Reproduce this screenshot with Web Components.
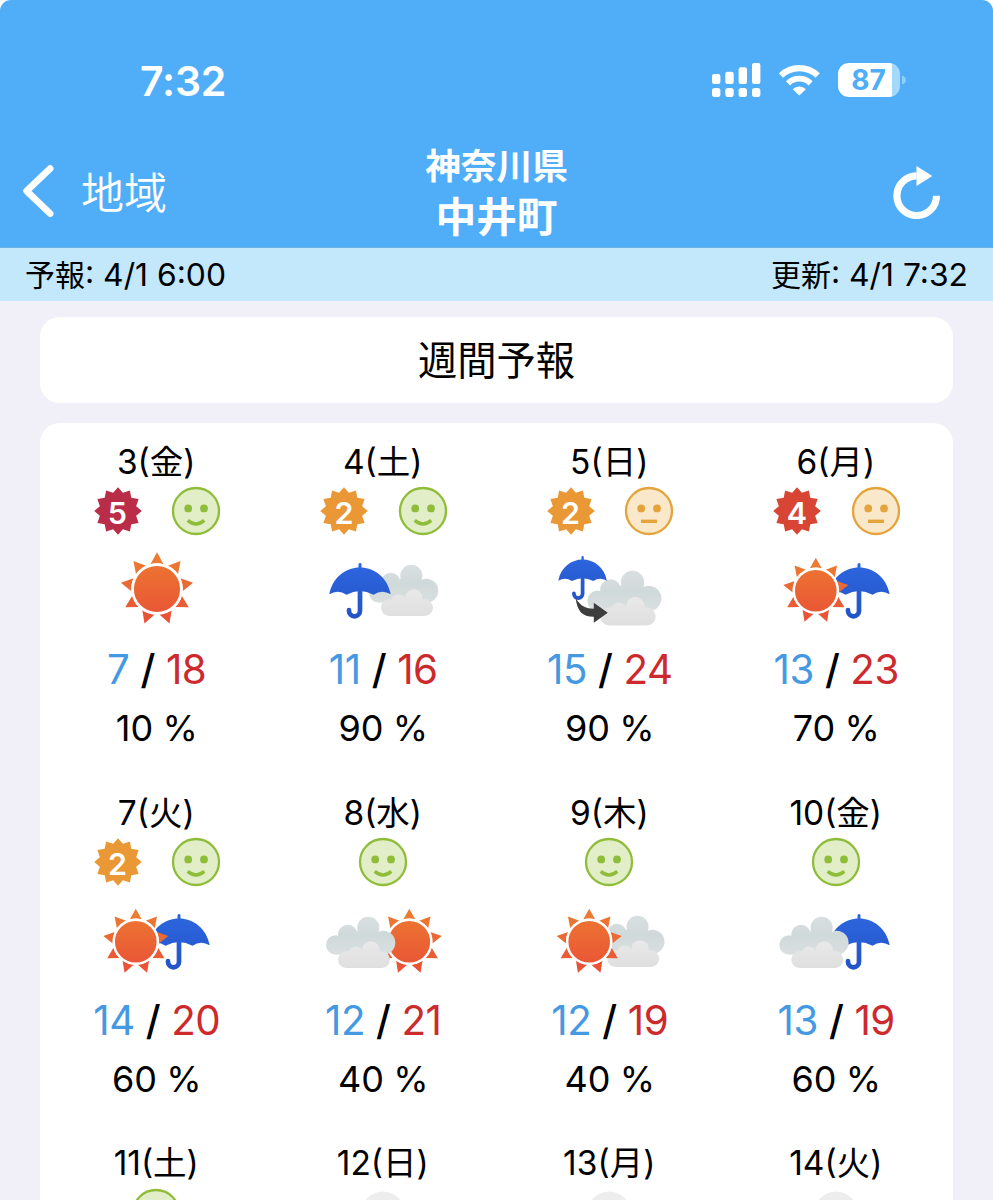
<!DOCTYPE html>
<html lang="ja">
<head>
<meta charset="utf-8">
<title>週間予報</title>
<style>
  body {
    margin: 0;
    background: #fff;
    color: #000;
    font-family: Inter, "Noto Sans CJK JP", sans-serif;
  }

  .kanji {
    font-size: 30px;
  }
</style>
</head>
<body>
<weather-app>
  <status-bar slot="header" time="7:32" battery="87"></status-bar>
  <nav-bar slot="header" back="地域">
    <span slot="prefecture">神奈川県</span>
    <span slot="town">中井町</span>
  </nav-bar>
  <update-strip>
    <span slot="forecast"><span class="kanji">予報</span>: 4/1 6:00</span>
    <span slot="updated"><span class="kanji">更新</span>: 4/1 7:32</span>
  </update-strip>
  <panel-card class="title">週間予報</panel-card>
  <panel-card class="days"><week-forecast></week-forecast></panel-card>
</weather-app>

<script>
const DAYS = [
  { date: "3(金)", uv: 5, mood: "good", sky: "sun", low: 7, high: 18, rain: 10 },
  { date: "4(土)", uv: 2, mood: "good", sky: "umbrella-cloud", low: 11, high: 16, rain: 90 },
  { date: "5(日)", uv: 2, mood: "fair", sky: "umbrella-to-cloud", low: 15, high: 24, rain: 90 },
  { date: "6(月)", uv: 4, mood: "fair", sky: "sun-umbrella", low: 13, high: 23, rain: 70 },
  { date: "7(火)", uv: 2, mood: "good", sky: "sun-umbrella", low: 14, high: 20, rain: 60 },
  { date: "8(水)", mood: "good", sky: "cloud-sun", low: 12, high: 21, rain: 40 },
  { date: "9(木)", mood: "good", sky: "sun-cloud", low: 12, high: 19, rain: 40 },
  { date: "10(金)", mood: "good", sky: "cloud-umbrella", low: 13, high: 19, rain: 60 },
  { date: "11(土)", mood: "good" },
  { date: "12(日)", mood: "none" },
  { date: "13(月)", mood: "none" },
  { date: "14(火)", mood: "none" },
];

class WeatherApp extends HTMLElement {
  constructor() {
    super();
    this.attachShadow({ mode: "open" });
    this.shadowRoot.innerHTML = `
      <style>
        :host {
          display: flex;
          flex-direction: column;
          width: 993px;
          height: 1200px;
          overflow: hidden;
          border-radius: 11px 11px 0 0;
          background: #f1f0f8;
        }

        header {
          box-sizing: border-box;
          flex: none;
          height: 248px;
          background: #50aef8;
          border-bottom: 1px solid #68b2e4;
        }
      </style>
      <header><slot name="header"></slot></header>
      <slot></slot>
    `;
  }
}

class StatusBar extends HTMLElement {
  constructor() {
    super();
    this.attachShadow({ mode: "open" });
    this.shadowRoot.innerHTML = `
      <style>
        :host {
          display: flex;
          align-items: center;
          justify-content: space-between;
          height: 80px;
          padding: 40px 87px 0 140px;
          color: #fff;
        }

        .time {
          padding-top: 1px;
          font-size: 41px;
          font-weight: 600;
          line-height: 50px;
          letter-spacing: -0.2px;
        }

        .icons {
          display: flex;
          align-items: center;
          gap: 17.5px;
        }

        svg {
          display: block;
        }

        .battery {
          display: flex;
          align-items: center;
          gap: 2px;
        }

        .level {
          box-sizing: border-box;
          width: 62px;
          height: 34px;
          padding-right: 1px;
          border-radius: 11px;
          background: linear-gradient(90deg, #fff 54px, #a3dafc 54px);
          color: #50aef8;
          font-size: 28px;
          font-weight: 700;
          line-height: 35px;
          text-align: center;
        }
      </style>
      <span class="time">${this.getAttribute("time")}</span>
      <div class="icons">
        <svg width="49" height="34" fill="#fff">
          <rect x="0" y="11" width="8.4" height="10" rx="2.2"/>
          <rect x="13.3" y="8.7" width="8.4" height="12.3" rx="2.2"/>
          <rect x="26.6" y="4.3" width="8.4" height="16.7" rx="2.2"/>
          <rect x="40" y="0" width="8.4" height="21" rx="2.2"/>
          <rect x="0" y="25" width="8.4" height="9" rx="2.8"/>
          <rect x="13.3" y="25" width="8.4" height="9" rx="2.8"/>
          <rect x="26.6" y="25" width="8.4" height="9" rx="2.8"/>
          <rect x="40" y="25" width="8.4" height="9" rx="2.8"/>
        </svg>
        <svg width="42" height="34" fill="none" stroke="#fff">
          <path d="M1.9 12.6A26.6 26.6 0 0 1 38.7 12.6" stroke-width="6.2"/>
          <path d="M9 20.3A16.2 16.2 0 0 1 31.6 20.3" stroke-width="5.8"/>
          <path d="M20.3 32.6l-6.6-6.4a9.3 9.3 0 0 1 13.2 0z" fill="#fff" stroke="none"/>
        </svg>
        <div class="battery">
          <div class="level">${this.getAttribute("battery")}</div>
          <svg width="4" height="12"><path d="M0 1.5Q4 3 4 6T0 10.5z" fill="#8fcffb"/></svg>
        </div>
      </div>
    `;
  }
}

class NavBar extends HTMLElement {
  constructor() {
    super();
    this.attachShadow({ mode: "open" });
    this.shadowRoot.innerHTML = `
      <style>
        :host {
          display: grid;
          grid-template-columns: 1fr auto 1fr;
          align-items: center;
          height: 106px;
          padding: 18px 52px 0 20px;
          color: #fff;
        }

        .back {
          display: flex;
          align-items: center;
          gap: 23px;
          font-size: 43px;
          font-weight: 350;
          line-height: 56px;
        }

        .back span {
          padding-top: 4px;
        }

        .place {
          display: flex;
          flex-direction: column;
          align-items: center;
          margin-left: 32px;
          padding-top: 4px;
          font-weight: 700;
        }

        .prefecture {
          font-size: 35.7px;
          line-height: 49px;
        }

        .town {
          font-size: 40.7px;
          line-height: 53px;
        }

        svg {
          display: block;
        }

        .reload {
          justify-self: end;
        }
      </style>
      <div class="back">
        <svg width="38" height="56" fill="none" stroke="#fff" stroke-width="6.6" stroke-linecap="round" stroke-linejoin="round">
          <path d="M30.2 5.5L6.6 28l23.6 22.7"/>
        </svg>
        <span>${this.getAttribute("back")}</span>
      </div>
      <div class="place">
        <div class="prefecture"><slot name="prefecture"></slot></div>
        <div class="town"><slot name="town"></slot></div>
      </div>
      <svg class="reload" width="48" height="56">
        <path d="M43.5 32.7A19.8 19.8 0 1 1 23.7 12.9" fill="none" stroke="#fff" stroke-width="7.2"/>
        <path d="M23.5 3L39.3 13 23.5 23z" fill="#fff"/>
      </svg>
    `;
  }
}

class UpdateStrip extends HTMLElement {
  constructor() {
    super();
    this.attachShadow({ mode: "open" });
    this.shadowRoot.innerHTML = `
      <style>
        :host {
          display: flex;
          flex: none;
          justify-content: space-between;
          height: 53px;
          padding: 0 25px;
          background: #c3e7fb;
          font-size: 31.8px;
          line-height: 53px;
        }
      </style>
      <slot name="forecast"></slot>
      <slot name="updated"></slot>
    `;
  }
}

class PanelCard extends HTMLElement {
  constructor() {
    super();
    this.attachShadow({ mode: "open" });
    this.shadowRoot.innerHTML = `
      <style>
        :host {
          display: block;
          flex: none;
          width: 913px;
          margin: 16px 0 0 40px;
          border-radius: 20px;
          background: #fff;
        }

        :host(.title) {
          height: 86px;
          font-size: 39.3px;
          line-height: 87px;
          text-align: center;
        }

        :host(.days) {
          margin-top: 20px;
        }
      </style>
      <slot></slot>
    `;
  }
}

class UvBadge extends HTMLElement {
  constructor() {
    super();
    this.attachShadow({ mode: "open" });
    const level = this.getAttribute("level");
    const colors = { 2: "#ea9836", 4: "#d94534", 5: "#b92d49" };
    // star with alternating outer and inner radius
    const spikes = 12;
    const points = [];
    for (let i = 0; i < spikes * 2; i++) {
      const r = i % 2 ? 18.8 : 23.8;
      const a = (i * Math.PI) / spikes;
      points.push(`${(24 + r * Math.sin(a)).toFixed(2)},${(24 - r * Math.cos(a)).toFixed(2)}`);
    }
    this.shadowRoot.innerHTML = `
      <style>
        :host {
          display: grid;
          width: 48px;
          height: 48px;
        }

        svg, span {
          grid-area: 1 / 1;
        }

        span {
          padding: 2px 1px 0 0;
          color: #fff;
          font-size: 30.5px;
          font-weight: 600;
          line-height: 48px;
          text-align: center;
        }
      </style>
      <svg width="48" height="48"><polygon points="${points.join(" ")}" fill="${colors[level]}"/></svg>
      <span>${level}</span>
    `;
  }
}

class MoodFace extends HTMLElement {
  constructor() {
    super();
    this.attachShadow({ mode: "open" });
    const mood = this.getAttribute("mood");
    const line = mood === "good" ? "#8fbd3a" : "#e5a33b";
    const fill = mood === "good" ? "#e1eec7" : "#fae8cb";
    const mouth = mood === "good" ? "M15.7 33.4Q24 40.4 32.3 33.4" : "M16 34.3h16";
    const face = `
      <circle cx="24" cy="24" r="23" fill="${fill}" stroke="${line}" stroke-width="2.3"/>
      <circle cx="16.2" cy="21.4" r="3.9" fill="${line}"/>
      <circle cx="32" cy="21.4" r="3.9" fill="${line}"/>
      <path d="${mouth}" fill="none" stroke="${line}" stroke-width="3.4"/>`;
    this.shadowRoot.innerHTML = `
      <style>
        :host {
          display: block;
          width: 48px;
          height: 48px;
        }

        svg {
          display: block;
          overflow: visible;
        }
      </style>
      <svg width="48" height="48">
        ${mood === "none" ? '<circle cx="24" cy="24" r="21.5" fill="#ededed"/>' : face}
      </svg>
    `;
  }
}

class SkyIcon extends HTMLElement {
  constructor() {
    super();
    this.attachShadow({ mode: "open" });
    const { sun, cloud, umbrella, arrow } = this;
    const skies = {
      "sun": sun(71, 44, 1.11),
      "umbrella-cloud": cloud(56, 19.7, 1) + umbrella(47, 18, 1),
      "umbrella-to-cloud": cloud(48.4, 25.7, 1.067) + umbrella(43.6, 11, 0.79) + arrow(),
      "sun-umbrella": umbrella(93, 18, 1) + sun(49.8, 45.7, 1),
      "cloud-sun": sun(96.3, 45.7, 1) + cloud(13, 20.7, 1),
      "sun-cloud": cloud(56.2, 19.7, 1) + sun(50.2, 45.7, 1),
      "cloud-umbrella": umbrella(93, 18, 1) + cloud(13.3, 20.7, 1),
    };
    this.shadowRoot.innerHTML = `
      <style>
        :host {
          display: block;
          width: 140px;
          height: 90px;
        }

        svg {
          display: block;
        }
      </style>
      <svg width="140" height="90">
        <defs>
          <linearGradient id="sun" gradientUnits="userSpaceOnUse" x1="0" y1="-33" x2="0" y2="33">
            <stop offset="0" stop-color="#ed7a30"/>
            <stop offset="1" stop-color="#e94f37"/>
          </linearGradient>
          <linearGradient id="back" gradientUnits="userSpaceOnUse" x1="0" y1="0" x2="0" y2="38">
            <stop offset="0" stop-color="#d9dfe0"/>
            <stop offset="0.5" stop-color="#d0d9da"/>
            <stop offset="1" stop-color="#dadfdf"/>
          </linearGradient>
          <linearGradient id="front" gradientUnits="userSpaceOnUse" x1="0" y1="25" x2="0" y2="51">
            <stop offset="0" stop-color="#e9e9ea"/>
            <stop offset="1" stop-color="#dfdfdf"/>
          </linearGradient>
          <linearGradient id="umbrella" gradientUnits="userSpaceOnUse" x1="0" y1="0" x2="0" y2="56">
            <stop offset="0" stop-color="#2d66df"/>
            <stop offset="1" stop-color="#2353c8"/>
          </linearGradient>
        </defs>
        ${skies[this.getAttribute("sky")]}
      </svg>
    `;
  }

  sun(x, y, scale) {
    let rays = "";
    for (let i = 0; i < 9; i++) {
      // a rotated ray would turn the gradient too, so each one gets a flat tint
      const t = (1 - Math.cos((i * 40 * Math.PI) / 180)) / 2;
      const fill = `rgb(${237 - 4 * t}, ${122 - 40 * t}, ${49 + 5 * t})`;
      rays += `<path d="M0-33L5.9-22.4Q0-24-5.9-22.4z" transform="rotate(${i * 40})" fill="${fill}"/>`;
    }
    return `
      <g transform="translate(${x} ${y}) scale(${scale})">
        <circle r="23.2" fill="#fff"/>
        ${rays}
        <circle r="22" fill="url(#sun)" stroke="#fff" stroke-width="2.4"/>
      </g>`;
  }

  cloud(x, y, scale) {
    return `
      <g transform="translate(${x} ${y}) scale(${scale})">
        <g fill="url(#back)">
          <circle cx="9.7" cy="28.2" r="9.7"/>
          <circle cx="21.7" cy="17.9" r="9.8"/>
          <circle cx="42.3" cy="11" r="11"/>
          <circle cx="57.3" cy="26" r="12"/>
          <path d="M9.7 37.9L9.7 24 21.7 17 42.3 11 57.3 22v16z"/>
        </g>
        <g fill="url(#front)">
          <rect x="12" y="34.5" width="52" height="16.8" rx="8.4"/>
          <circle cx="29.7" cy="37" r="7.3"/>
          <circle cx="44.9" cy="33.3" r="8.7"/>
          <path d="M22.5 37h31.1v8H22.5z"/>
        </g>
      </g>`;
  }

  umbrella(x, y, scale) {
    return `
      <g transform="translate(${x} ${y}) scale(${scale})" fill="none" stroke="url(#umbrella)" stroke-linecap="round">
        <path d="M-.01 1.5L.01 8" stroke-width="3"/>
        <path d="M0 28V47.8a5.5 5.5 0 0 1-11 0v-.6" stroke-width="4.7"/>
        <path d="M-30.7 31.3C-27.5 14-14 4.5 0 4.5S27.5 14 30.7 31.3Q22 26 13.5 31.7Q0 24.4-13.5 31.7Q-22 26-30.7 31.3z" fill="url(#umbrella)" stroke="none"/>
      </g>`;
  }

  arrow() {
    return '<path d="M36.6 53.3C42 61.5 47 63.7 54.8 63.7V57.7L68.8 67.7 54.8 77.7V71.7C43 71.7 38.5 66.5 36.6 53.3z" fill="#3d3d3d"/>';
  }
}

class DayForecast extends HTMLElement {
  constructor() {
    super();
    this.attachShadow({ mode: "open" });
  }

  set day(value) {
    this._day = value;
    this._render();
  }

  get day() {
    return this._day;
  }

  _render() {
    const { date, uv, mood, sky, low, high, rain } = this._day;
    this.shadowRoot.innerHTML = `
      <style>
        :host {
          display: flex;
          flex-direction: column;
          align-items: center;
          white-space: nowrap;
        }

        .date {
          font-size: 33.5px;
          line-height: 40px;
        }

        .indices {
          display: flex;
          gap: 30.3px;
          margin: 5.3px 0 9.7px;
        }

        uv-badge {
          margin-left: 1.6px;
        }

        .temps {
          margin-top: 10px;
          padding-left: 1px;
          font-size: 40.3px;
          letter-spacing: -0.4px;
          line-height: 50px;
        }

        .low {
          color: #4599e2;
        }

        .high {
          color: #cc2a2d;
        }

        .slash {
          font-weight: 500;
        }

        .rain {
          margin-top: 10px;
          padding-left: 1px;
          font-size: 36px;
          line-height: 46px;
          word-spacing: -0.8px;
        }
      </style>
      <div class="date">${date}</div>
      <div class="indices">
        ${uv ? `<uv-badge level="${uv}"></uv-badge>` : ""}
        <mood-face mood="${mood}"></mood-face>
      </div>
      ${sky ? `
      <sky-icon sky="${sky}"></sky-icon>
      <div class="temps"><span class="low">${low}</span> <span class="slash">/</span> <span class="high">${high}</span></div>
      <div class="rain">${rain} %</div>` : ""}
    `;
  }
}

class WeekForecast extends HTMLElement {
  constructor() {
    super();
    this.attachShadow({ mode: "open" });
    this.shadowRoot.innerHTML = `
      <style>
        :host {
          display: grid;
          grid-template-columns: repeat(4, 1fr);
          grid-auto-rows: 350.7px;
          padding: 19px 4px 0 3px;
        }
      </style>
    `;
    DAYS.forEach((day) => {
      const element = document.createElement("day-forecast");
      element.day = day;
      this.shadowRoot.appendChild(element);
    });
  }
}

customElements.define("uv-badge", UvBadge);
customElements.define("mood-face", MoodFace);
customElements.define("sky-icon", SkyIcon);
customElements.define("day-forecast", DayForecast);
customElements.define("week-forecast", WeekForecast);
customElements.define("panel-card", PanelCard);
customElements.define("update-strip", UpdateStrip);
customElements.define("nav-bar", NavBar);
customElements.define("status-bar", StatusBar);
customElements.define("weather-app", WeatherApp);
</script>
</body>
</html>
